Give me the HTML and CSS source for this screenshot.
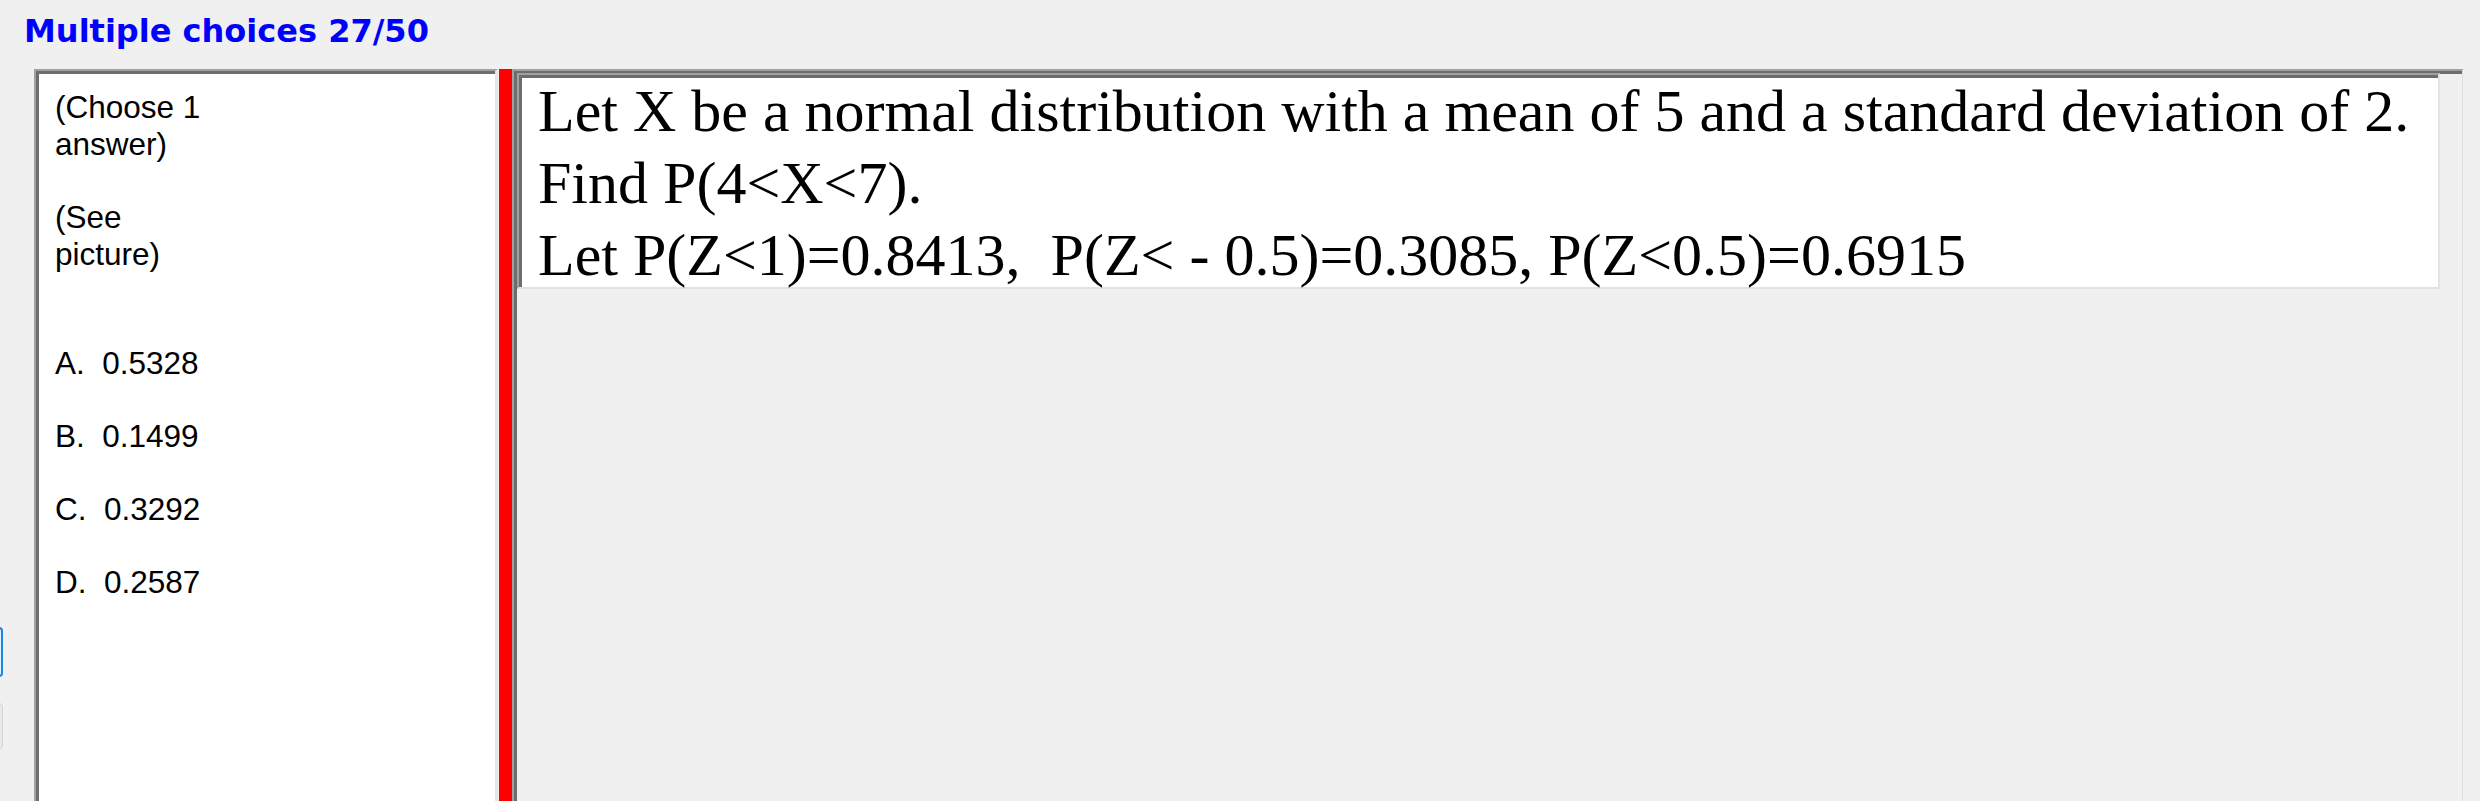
FILE: index.html
```html
<!DOCTYPE html>
<html lang="en">
<head>
<meta charset="utf-8">
<title>Multiple choices 27/50</title>
<link rel="stylesheet" href="styles.css">
</head>
<body>
<div class="page">
  <h1 class="title">Multiple choices 27/50</h1>
  <div class="main">
    <div class="gutter">
      <div class="edge-btn edge-btn--focus"></div>
      <div class="edge-btn edge-btn--plain"></div>
    </div>
    <div class="answers">
      <p class="note">(Choose 1<br>answer)</p>
      <p class="note">(See<br>picture)</p>
      <ul class="options">
        <li class="option">A.  0.5328</li>
        <li class="option">B.  0.1499</li>
        <li class="option">C.  0.3292</li>
        <li class="option">D.  0.2587</li>
      </ul>
    </div>
    <div class="splitter"></div>
    <div class="question-pane">
      <div class="question-box">
        <p class="question">Let X be a normal distribution with a mean of 5 and a standard deviation of 2.<br>Find P(4&lt;X&lt;7).<br>Let P(Z&lt;1)=0.8413,&nbsp; P(Z&lt; - 0.5)=0.3085, P(Z&lt;0.5)=0.6915</p>
      </div>
    </div>
  </div>
</div>
</body>
</html>
```

FILE: styles.css
```css
html, body {
  margin: 0;
  padding: 0;
  background: #f0f0f0;
  overflow: hidden;
}

.page {
  width: 2480px;
  height: 801px;
}

.title {
  margin: 0 0 19px 0;
  padding: 13px 0 0 24px;
  font-family: "DejaVu Sans", "Liberation Sans", sans-serif;
  font-weight: bold;
  font-size: 32px;
  line-height: 37px;
  color: #0000ff;
}

.main {
  display: flex;
  align-items: stretch;
  height: calc(100vh - 69px);
}

.gutter {
  flex: none;
  width: 34px;
  display: flex;
  flex-direction: column;
  overflow: hidden;
}

.edge-btn {
  box-sizing: border-box;
  width: 80px;
  margin-left: -77px;
  border-radius: 4px;
}

.edge-btn--focus {
  margin-top: 558px;
  height: 50px;
  border: 2px solid #1a84de;
  background: #e5f1fb;
}

.edge-btn--plain {
  margin-top: 26px;
  height: 46px;
  border: 1px solid #d4d4d4;
  background: #e9e9e9;
}

.answers {
  flex: none;
  box-sizing: border-box;
  width: 464px;
  margin-right: 1px;
  background: #ffffff;
  border-top: 2px solid #a0a0a0;
  border-left: 2px solid #a0a0a0;
  border-right: 3px solid #e6e6e6;
  box-shadow: inset 3px 3px 0 #6d6d6d;
  padding: 18px 0 0 19px;
  font-family: "Liberation Sans", Arial, sans-serif;
  font-size: 31.5px;
  line-height: 37px;
  color: #000000;
}

.note {
  margin: 0 0 36px 0;
}

.note + .note {
  margin-bottom: 72px;
}

.options {
  list-style: none;
  margin: 0;
  padding: 0;
}

.option {
  white-space: pre;
  margin-bottom: 36px;
}

.splitter {
  flex: none;
  width: 13px;
  background: #ff0000;
}

.question-pane {
  flex: none;
  box-sizing: border-box;
  width: 1951px;
  border-top: 2px solid #a0a0a0;
  border-left: 2px solid #a0a0a0;
  border-right: 1px solid #dcdcdc;
  box-shadow: inset 3px 3px 0 #6d6d6d;
  padding: 2px 22px 0 3px;
}

.question-box {
  box-sizing: content-box;
  height: 212px;
  background: #ffffff;
  border-top: 2px solid #a0a0a0;
  border-left: 2px solid #a0a0a0;
  border-right: 2px solid #e3e3e3;
  border-bottom: 2px solid #e3e3e3;
  box-shadow: inset 3px 3px 0 #6d6d6d;
  padding: 0 0 0 19px;
}

.question {
  margin: 0;
  font-family: "Liberation Serif", "Times New Roman", serif;
  font-size: 60px;
  line-height: 72px;
  color: #000000;
  white-space: nowrap;
}
```
